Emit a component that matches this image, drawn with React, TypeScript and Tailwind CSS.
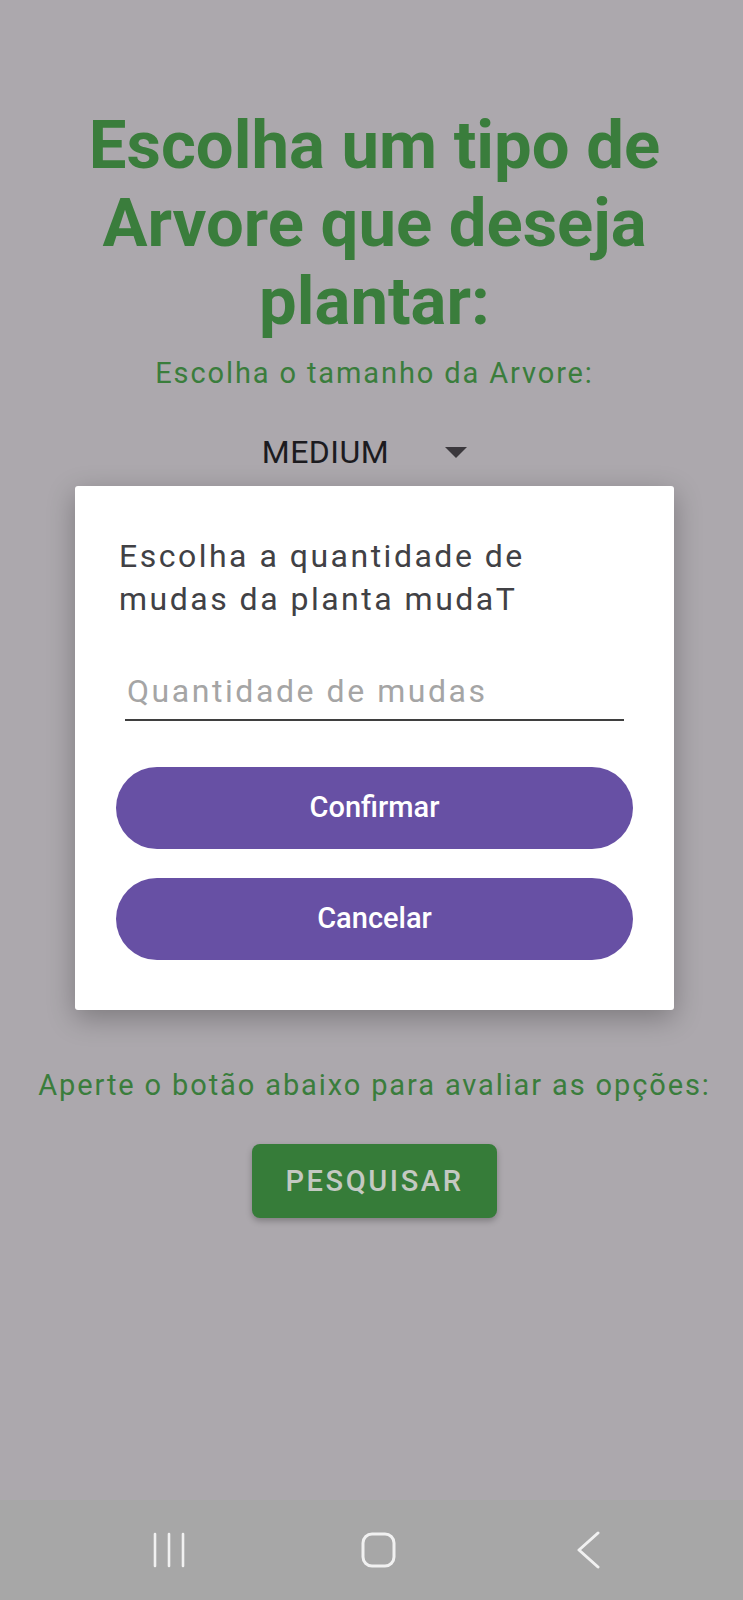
import { useState } from 'react';

const GREEN = 'text-[#3a7d3c]';

function NavBar() {
  return (
    <div className="h-[100px] bg-[#a7a7a7] flex items-center justify-center gap-[150px] pl-[15px]">
      <div className="w-[60px] flex justify-center">
        <svg width="34" height="36" viewBox="0 0 34 36" fill="none">
          <g stroke="#f1f1f1" strokeWidth="2.6" strokeLinecap="round">
            <line x1="3" y1="2" x2="3" y2="34" />
            <line x1="17" y1="2" x2="17" y2="34" />
            <line x1="31" y1="2" x2="31" y2="34" />
          </g>
        </svg>
      </div>
      <div className="w-[60px] flex justify-center">
        <svg width="36" height="37" viewBox="0 0 36 37" fill="none">
          <rect x="2" y="2" width="31" height="32" rx="9" stroke="#f1f1f1" strokeWidth="3" />
        </svg>
      </div>
      <div className="w-[60px] flex justify-center">
        <svg width="24" height="38" viewBox="0 0 24 38" fill="none">
          <polyline points="21,2 2,19 21,36" stroke="#f1f1f1" strokeWidth="3" strokeLinecap="round" strokeLinejoin="round" />
        </svg>
      </div>
    </div>
  );
}

function QuantityDialog() {
  const [qty, setQty] = useState('');
  return (
    <div className="absolute left-[75px] top-[486px] w-[599px] bg-white rounded-[3px] shadow-[0_8px_28px_rgba(0,0,0,0.28)] px-[41px] pt-[49px] pb-[50px]">
      <p className="w-[480px] pl-[3px] text-[32px] leading-[43px] tracking-[0.078em] text-[#414145]">
        Escolha a quantidade de mudas da planta mudaT
      </p>
      <div className="mx-[9px] mt-[50px] pb-[8px] border-b-2 border-[#3f3f3f]">
        <input
          value={qty}
          onChange={(e) => setQty(e.target.value)}
          placeholder="Quantidade de mudas"
          className="w-full h-[40px] pl-[2px] bg-transparent outline-none text-[32px] tracking-[0.08em] text-[#1f1f1f] placeholder:text-[#a5a5a5]"
          style={{ fontFamily: 'Roboto, sans-serif' }}
        />
      </div>
      <button className="mt-[46px] w-full h-[82px] rounded-full bg-[#6750a4] text-white text-[29px] font-medium">
        Confirmar
      </button>
      <button className="mt-[29px] w-full h-[82px] rounded-full bg-[#6750a4] text-white text-[29px] font-medium">
        Cancelar
      </button>
    </div>
  );
}

export default function App() {
  return (
    <div className="relative w-[743px] h-[1600px] flex flex-col bg-[#aca8ad] font-['Roboto',sans-serif] overflow-hidden">
      <div className="flex-1 flex flex-col items-center pl-[6px]">
        <h1 className={`pt-[106px] w-[640px] text-center text-[67px] leading-[78px] font-bold ${GREEN}`}>
          Escolha um tipo de Arvore que deseja plantar:
        </h1>
        <p className={`mt-[15px] text-[29px] leading-[36px] tracking-[0.065em] ${GREEN}`}>
          Escolha o tamanho da Arvore:
        </p>
        <div className="mt-[41px] flex items-center pr-[20px]">
          <span className="text-[32px] leading-[40px] tracking-[0.5px] text-[#1c1b1f]">MEDIUM</span>
          <svg className="ml-[56px]" width="22" height="11" viewBox="0 0 22 11">
            <polygon points="0,0 22,0 11,11" fill="#3b383d" />
          </svg>
        </div>
        <p className={`mt-[595px] text-[29px] leading-[36px] tracking-[0.065em] ${GREEN}`}>
          Aperte o botão abaixo para avaliar as opções:
        </p>
        <button className="mt-[41px] w-[245px] h-[74px] rounded-[8px] bg-[#367c39] shadow-[0_3px_6px_rgba(0,0,0,0.25)] text-[#c4c9c2] text-[29px] leading-[34px] font-medium tracking-[2.6px] uppercase">
          Pesquisar
        </button>
      </div>
      <NavBar />
      <QuantityDialog />
    </div>
  );
}
